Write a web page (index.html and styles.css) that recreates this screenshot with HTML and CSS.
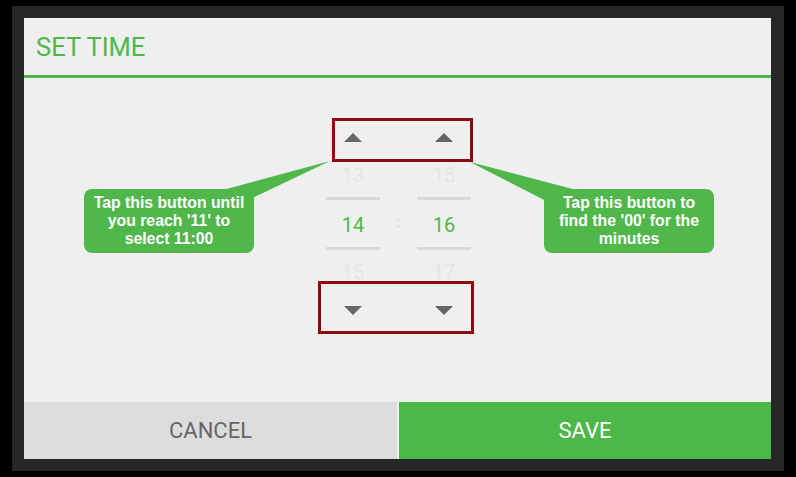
FILE: index.html
```html
<!DOCTYPE html>
<html lang="en">
<head>
<meta charset="utf-8">
<title>Set time</title>
<link rel="stylesheet" href="styles.css">
</head>
<body>
<div class="frame">
  <div class="panel">
    <header class="dialog-header">SET TIME</header>

    <main class="dialog-body">
      <div class="picker">
        <div class="column">
          <button class="step"><span class="arrow up"></span></button>
          <div class="num faint prev">13</div>
          <div class="rule"></div>
          <div class="num current">14</div>
          <div class="rule"></div>
          <div class="num faint next">15</div>
          <button class="step"><span class="arrow down"></span></button>
        </div>
        <div class="sep">:</div>
        <div class="column">
          <button class="step"><span class="arrow up"></span></button>
          <div class="num faint prev">15</div>
          <div class="rule"></div>
          <div class="num current">16</div>
          <div class="rule"></div>
          <div class="num faint next">17</div>
          <button class="step"><span class="arrow down"></span></button>
        </div>
      </div>

      <!-- callout pointers -->
      <svg class="tails" width="747" height="324" viewBox="0 0 747 324">
        <polygon points="306,83 195,113 220,124" fill="#50b84b"/>
        <polygon points="446,84 560,114 530,127" fill="#50b84b"/>
      </svg>

      <div class="callout callout-left">Tap this button until you reach '11' to select 11:00</div>
      <div class="callout callout-right">Tap this button to find the '00' for the minutes</div>

      <div class="highlight highlight-top"></div>
      <div class="highlight highlight-bottom"></div>
    </main>

    <footer class="dialog-actions">
      <button class="action cancel">CANCEL</button>
      <button class="action save">SAVE</button>
    </footer>
  </div>
</div>
</body>
</html>
```

FILE: styles.css
```css
html, body {
  margin: 0;
  padding: 0;
}

body {
  width: 796px;
  height: 477px;
  background: #000;
  overflow: hidden;
  font-family: Roboto, "Noto Sans", sans-serif;
}

.frame {
  margin: 6px 12px 6px 12px;
  padding: 12px 13px 12px 12px;
  background: #252826;
}

.panel {
  width: 747px;
  height: 441px;
  background: #efefef;
  display: flex;
  flex-direction: column;
}

.dialog-header {
  height: 60px;
  flex-shrink: 0;
  display: flex;
  align-items: center;
  padding-left: 12px;
  padding-top: 1px;
  box-sizing: border-box;
  border-bottom: 3px solid #4cb848;
  color: #4cb848;
  font-size: 25.5px;
  font-weight: 400;
}

.dialog-body {
  position: relative;
  flex: 1;
  padding-top: 34px;
  box-sizing: border-box;
}

.picker {
  display: flex;
  justify-content: center;
  align-items: flex-start;
  padding-left: 2px;
}

.column {
  width: 54px;
  display: flex;
  flex-direction: column;
  align-items: stretch;
}

.step {
  height: 50px;
  border: 0;
  padding: 0;
  background: transparent;
  display: flex;
  align-items: center;
  justify-content: center;
}

.arrow {
  width: 0;
  height: 0;
  border-left: 9px solid transparent;
  border-right: 9px solid transparent;
}

.arrow.up {
  border-bottom: 9px solid #666;
  margin-top: 1px;
}

.arrow.down {
  border-top: 9px solid #666;
  margin-top: 1px;
}

.num {
  display: flex;
  align-items: center;
  justify-content: center;
  box-sizing: border-box;
  font-size: 20px;
}

.num.faint {
  height: 35px;
  color: #e5e5e5;
}

.num.prev {
  padding-bottom: 9px;
}

.num.next {
  padding-top: 9px;
}

.num.current {
  height: 47px;
  padding-top: 2px;
  color: #4cb848;
}

.rule {
  height: 3px;
  background: #d9d9d9;
}

.sep {
  width: 37px;
  margin-top: 102px;
  text-align: center;
  color: #c8c8c8;
  font-size: 14px;
}

.tails {
  position: absolute;
  left: 0;
  top: 0;
  pointer-events: none;
}

.callout {
  position: absolute;
  top: 111px;
  width: 170px;
  height: 64px;
  box-sizing: border-box;
  padding: 5px 2px;
  border-radius: 8px;
  background: #50b84b;
  color: #fff;
  font-family: "Liberation Sans", Arial, sans-serif;
  font-weight: bold;
  font-size: 15.8px;
  line-height: 18px;
  text-align: center;
}

.callout-left {
  left: 60px;
}

.callout-right {
  left: 520px;
  padding-left: 10px;
  padding-right: 10px;
}

.highlight {
  position: absolute;
  box-sizing: border-box;
  border: 3px solid #8e0a0c;
}

.highlight-top {
  left: 308px;
  top: 40px;
  width: 141px;
  height: 44px;
}

.highlight-bottom {
  left: 294px;
  top: 203px;
  width: 156px;
  height: 53px;
}

.dialog-actions {
  height: 57px;
  flex-shrink: 0;
  display: flex;
  gap: 2px;
  background: #eeeeee;
}

.action {
  border: 0;
  padding: 0;
  font-family: Roboto, "Noto Sans", sans-serif;
  font-size: 22px;
  font-weight: 400;
}

.cancel {
  width: 373px;
  background: #dddddd;
  color: #666;
}

.save {
  flex: 1;
  background: #4cb848;
  color: #fff;
}
```
